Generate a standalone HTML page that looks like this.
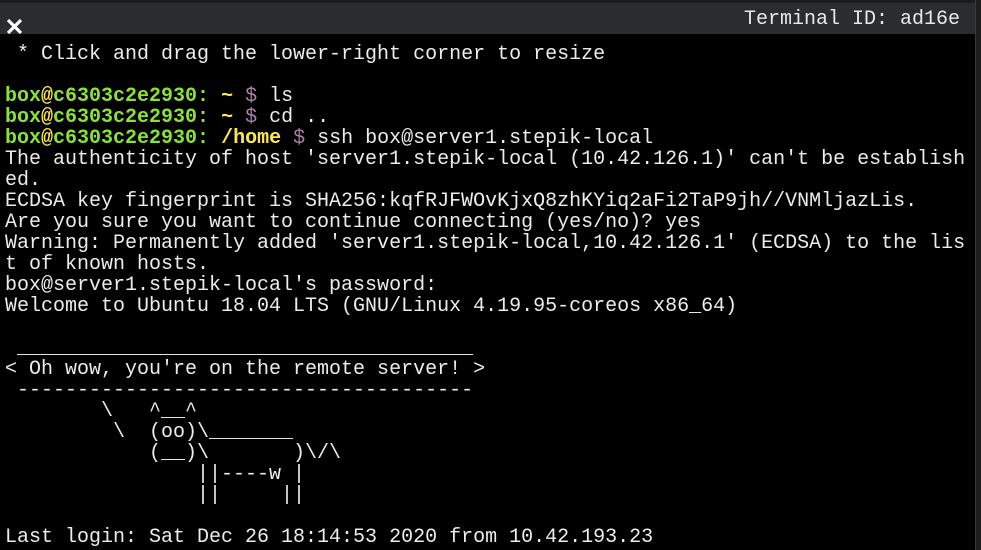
<!DOCTYPE html>
<html><head><meta charset="utf-8"><style>
html,body{margin:0;padding:0;width:981px;height:550px;overflow:hidden;background:#000;}
#top{position:absolute;left:0;top:0;width:981px;height:3px;background:#1b1b1c;}
#hdr{position:absolute;left:0;top:3px;width:975px;height:31px;background:#2b2c2e;}
#x{position:absolute;left:5px;top:13px;width:20px;height:20px;}
#tid{position:absolute;right:15px;top:6px;color:#e8e8e8;font:20px "Liberation Mono",monospace;line-height:22px;}
#side{position:absolute;left:975px;top:0;width:6px;height:550px;background:#1e1e1e;border-left:1px solid #3a3a3a;box-sizing:border-box;}
pre{position:absolute;left:5px;top:44px;margin:0;color:#ececec;font:20px "Liberation Mono",monospace;line-height:21px;white-space:pre;}
.g{color:#8ae234;font-weight:bold}.y{color:#fce94f;font-weight:bold}.p{color:#ad7fa8}
</style></head><body>
<div id="top"></div>
<div id="hdr"><svg id="x" viewBox="0 0 20 20"><path d="M3 4 L16 17 M16 4 L3 17" stroke="#fff" stroke-width="3.2"/></svg><div id="tid">Terminal ID: ad16e</div></div>
<div id="side"></div>
<pre> * Click and drag the lower-right corner to resize

<span class="g">box</span><span class="y">@</span><span class="g">c6303c2e2930:</span> <span class="y">~</span> <span class="p">$</span> ls
<span class="g">box</span><span class="y">@</span><span class="g">c6303c2e2930:</span> <span class="y">~</span> <span class="p">$</span> cd ..
<span class="g">box</span><span class="y">@</span><span class="g">c6303c2e2930:</span> <span class="y">/home</span> <span class="p">$</span> ssh box@server1.stepik-local
The authenticity of host 'server1.stepik-local (10.42.126.1)' can't be establish
ed.
ECDSA key fingerprint is SHA256:kqfRJFWOvKjxQ8zhKYiq2aFi2TaP9jh//VNMljazLis.
Are you sure you want to continue connecting (yes/no)? yes
Warning: Permanently added 'server1.stepik-local,10.42.126.1' (ECDSA) to the lis
t of known hosts.
box@server1.stepik-local's password:
Welcome to Ubuntu 18.04 LTS (GNU/Linux 4.19.95-coreos x86_64)

 ______________________________________
&lt; Oh wow, you're on the remote server! &gt;
 --------------------------------------
        \   ^__^
         \  (oo)\_______
            (__)\       )\/\
                ||----w |
                ||     ||

Last login: Sat Dec 26 18:14:53 2020 from 10.42.193.23</pre>
</body></html>
